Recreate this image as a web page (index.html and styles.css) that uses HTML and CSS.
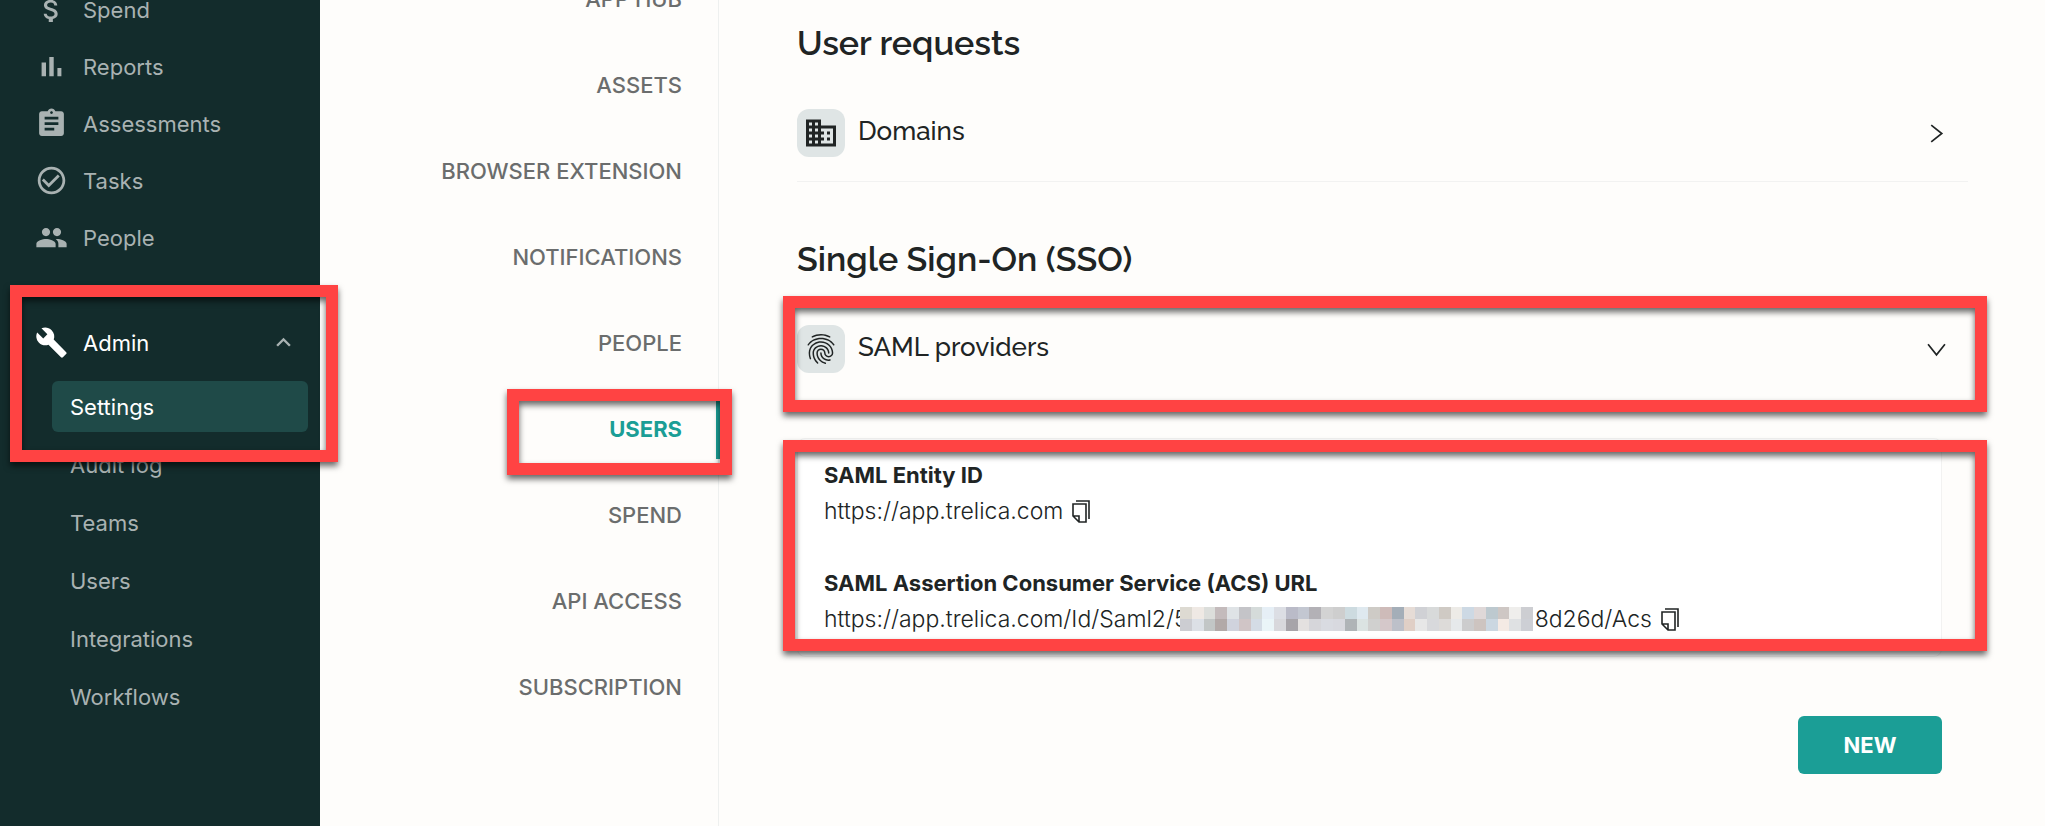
FILE: index.html
```html
<!DOCTYPE html>
<html lang="en">
<head>
    <meta charset="UTF-8">
    <meta name="viewport" content="width=device-width, initial-scale=1.0">
    <title>Settings - Users</title>
    <link rel="stylesheet" href="styles.css">
</head>
<body>
    <div class="app">
        <nav class="sidebar" aria-label="Main">
            <ul class="menu">
                <li><a class="menu-link" href="#">
                    <svg class="menu-icon" viewBox="0 0 24 24"><path d="M11.8 10.9c-2.27-.59-3-1.2-3-2.15 0-1.09 1.01-1.85 2.7-1.85 1.78 0 2.44.85 2.5 2.1h2.21c-.07-1.72-1.12-3.3-3.21-3.81V3h-3v2.16c-1.94.42-3.5 1.68-3.5 3.61 0 2.31 1.91 3.46 4.7 4.13 2.5.6 3 1.48 3 2.41 0 .69-.49 1.79-2.7 1.79-2.06 0-2.87-.92-2.98-2.1h-2.2c.12 2.19 1.76 3.42 3.68 3.83V21h3v-2.15c1.95-.37 3.5-1.5 3.5-3.55 0-2.84-2.43-3.81-4.7-4.4z"/></svg>
                    Spend</a></li>
                <li><a class="menu-link" href="#">
                    <svg class="menu-icon" viewBox="0 0 24 24"><path d="M4.8 9h3.2v10H4.8zM10.4 5h3.2v14h-3.2zM16.3 13h2.9v6h-2.9z"/></svg>
                    Reports</a></li>
                <li><a class="menu-link" href="#">
                    <svg class="menu-icon" viewBox="0 0 24 24"><path d="M19 3h-4.18C14.4 1.84 13.3 1 12 1c-1.3 0-2.4.84-2.82 2H5c-1.1 0-2 .9-2 2v14c0 1.1.9 2 2 2h14c1.1 0 2-.9 2-2V5c0-1.1-.9-2-2-2zm-7 0c.55 0 1 .45 1 1s-.45 1-1 1-1-.45-1-1 .45-1 1-1zm2 14H7v-2h7v2zm3-4H7v-2h10v2zm0-4H7V7h10v2z"/></svg>
                    Assessments</a></li>
                <li><a class="menu-link" href="#">
                    <svg class="menu-icon" viewBox="0 0 24 24"><path d="M16.59 7.58L10 14.17l-3.59-3.58L5 12l5 5 8-8zM12 2C6.48 2 2 6.48 2 12s4.48 10 10 10 10-4.48 10-10S17.52 2 12 2zm0 18c-4.42 0-8-3.58-8-8s3.58-8 8-8 8 3.58 8 8-3.58 8-8 8z"/></svg>
                    Tasks</a></li>
                <li><a class="menu-link" href="#">
                    <svg class="menu-icon" viewBox="0 0 24 24"><path d="M16 11c1.66 0 2.99-1.34 2.99-3S17.66 5 16 5c-1.66 0-3 1.34-3 3s1.34 3 3 3zm-8 0c1.66 0 2.99-1.34 2.99-3S9.66 5 8 5C6.34 5 5 6.34 5 8s1.34 3 3 3zm0 2c-2.33 0-7 1.17-7 3.5V19h14v-2.5c0-2.33-4.67-3.5-7-3.5zm8 0c-.29 0-.62.02-.97.05 1.16.84 1.97 1.97 1.97 3.45V19h6v-2.5c0-2.33-4.67-3.5-7-3.5z"/></svg>
                    People</a></li>
            </ul>

            <div class="admin">
                <a class="menu-link active" href="#">
                    <svg class="menu-icon" viewBox="0 0 24 24"><path d="M22.7 19l-9.1-9.1c.9-2.3.4-5-1.5-6.9-2-2-5-2.4-7.4-1.3L9 6 6 9 1.6 4.7C.4 7.1.9 10.1 2.9 12.1c1.9 1.9 4.6 2.4 6.9 1.5l9.1 9.1c.4.4 1 .4 1.4 0l2.3-2.3c.5-.4.5-1.1.1-1.4z"/></svg>
                    Admin
                    <svg class="collapse-icon" viewBox="0 0 24 24"><path d="M12 8l-6 6 1.41 1.41L12 10.83l4.59 4.58L18 14z"/></svg>
                </a>
                <ul class="submenu">
                    <li><a class="submenu-link active" href="#">Settings</a></li>
                    <li><a class="submenu-link" href="#">Audit log</a></li>
                    <li><a class="submenu-link" href="#">Teams</a></li>
                    <li><a class="submenu-link" href="#">Users</a></li>
                    <li><a class="submenu-link" href="#">Integrations</a></li>
                    <li><a class="submenu-link" href="#">Workflows</a></li>
                </ul>
                <div class="highlight highlight-admin"></div>
            </div>
        </nav>

        <nav class="tabs" aria-label="Settings">
            <a class="tab" href="#">APP HUB</a>
            <a class="tab" href="#">ASSETS</a>
            <a class="tab" href="#">BROWSER EXTENSION</a>
            <a class="tab" href="#">NOTIFICATIONS</a>
            <a class="tab" href="#">PEOPLE</a>
            <a class="tab selected" href="#">USERS<span class="highlight highlight-tab"></span></a>
            <a class="tab" href="#">SPEND</a>
            <a class="tab" href="#">API ACCESS</a>
            <a class="tab" href="#">SUBSCRIPTION</a>
        </nav>

        <main class="content">
            <section>
                <h2>User requests</h2>
                <a class="setting divided" href="#">
                    <span class="tile">
                        <svg viewBox="0 0 24 24"><path d="M12 7V3H2v18h20V7H12zM6 19H4v-2h2v2zm0-4H4v-2h2v2zm0-4H4V9h2v2zm0-4H4V5h2v2zm4 12H8v-2h2v2zm0-4H8v-2h2v2zm0-4H8V9h2v2zm0-4H8V5h2v2zm10 12h-8v-2h2v-2h-2v-2h2v-2h-2V9h8v10zm-2-8h-2v2h2v-2zm0 4h-2v2h2v-2z"/></svg>
                    </span>
                    <span class="setting-name">Domains</span>
                    <svg class="chevron" viewBox="0 0 18 18"><path d="M4 1l10 8-10 8"/></svg>
                </a>
            </section>

            <section>
                <h2>Single Sign-On (SSO)</h2>
                <a class="setting" href="#">
                    <span class="tile">
                        <svg viewBox="0 0 24 24"><path d="M17.81 4.47c-.08 0-.16-.02-.23-.06C15.66 3.42 14 3 12.01 3c-1.98 0-3.86.47-5.57 1.41-.24.13-.54.04-.68-.2-.13-.24-.04-.55.2-.68C7.82 2.52 9.86 2 12.01 2c2.13 0 3.99.47 6.03 1.52.25.13.34.43.21.67-.09.18-.26.28-.44.28zM3.5 9.72c-.1 0-.2-.03-.29-.09-.23-.16-.28-.47-.12-.7.99-1.4 2.25-2.5 3.75-3.27C9.98 4.04 14 4.03 17.15 5.65c1.5.77 2.76 1.86 3.75 3.25.16.22.11.54-.12.7-.23.16-.54.11-.7-.12-.9-1.26-2.04-2.25-3.39-2.94-2.87-1.47-6.54-1.47-9.4.01-1.36.7-2.5 1.7-3.4 2.96-.08.14-.23.21-.39.21zm6.25 12.07c-.13 0-.26-.05-.35-.15-.87-.87-1.34-1.43-2.01-2.64-.69-1.23-1.05-2.73-1.05-4.34 0-2.97 2.54-5.39 5.66-5.39s5.66 2.42 5.66 5.39c0 .28-.22.5-.5.5s-.5-.22-.5-.5c0-2.42-2.09-4.39-4.66-4.39-2.57 0-4.66 1.97-4.66 4.39 0 1.44.32 2.77.93 3.85.64 1.15 1.08 1.64 1.85 2.42.19.2.19.51 0 .71-.11.1-.24.15-.37.15zm7.17-1.85c-1.19 0-2.24-.3-3.1-.89-1.49-1.01-2.38-2.65-2.38-4.39 0-.28.22-.5.5-.5s.5.22.5.5c0 1.41.72 2.74 1.94 3.56.71.48 1.54.71 2.54.71.24 0 .64-.03 1.04-.1.27-.05.53.13.58.41.05.27-.13.53-.41.58-.57.11-1.07.12-1.21.12zM14.91 22c-.04 0-.09-.01-.13-.02-1.59-.44-2.63-1.03-3.72-2.1-1.4-1.39-2.17-3.24-2.17-5.22 0-1.62 1.38-2.94 3.08-2.94 1.7 0 3.08 1.32 3.08 2.94 0 1.07.93 1.94 2.08 1.94s2.08-.87 2.08-1.94c0-3.77-3.25-6.83-7.25-6.83-2.84 0-5.44 1.58-6.61 4.03-.39.81-.59 1.76-.59 2.8 0 .78.07 2.01.67 3.61.1.26-.03.55-.29.64-.26.1-.55-.04-.64-.29-.49-1.31-.73-2.61-.73-3.96 0-1.2.23-2.29.68-3.24 1.33-2.79 4.28-4.6 7.51-4.6 4.55 0 8.25 3.51 8.25 7.83 0 1.62-1.38 2.94-3.08 2.94s-3.08-1.32-3.08-2.94c0-1.07-.93-1.94-2.08-1.94s-2.08.87-2.08 1.94c0 1.71.66 3.31 1.87 4.51.95.94 1.86 1.46 3.27 1.85.27.07.42.35.35.61-.05.23-.26.38-.47.38z"/></svg>
                    </span>
                    <span class="setting-name">SAML providers</span>
                    <svg class="chevron" viewBox="0 0 18 18"><path d="M1 4l8 10 8-10"/></svg>
                    <span class="highlight highlight-provider"></span>
                </a>

                <div class="details-wrap">
                    <dl class="details">
                        <dt>SAML Entity ID</dt>
                        <dd>https://app.trelica.com
                            <button class="copy" type="button" aria-label="Copy entity ID"><svg viewBox="0 0 18 23"><path d="M1 4h13v18H7l-6-6zM1 16h6v6M4 1h13v18"/></svg></button>
                        </dd>
                        <dt>SAML Assertion Consumer Service (ACS) URL</dt>
                        <dd>
                            <span class="url-start">https://app.trelica.com/Id/Saml2/5</span>
                            <svg class="redacted" id="redacted" viewBox="0 0 30 2" preserveAspectRatio="none" shape-rendering="crispEdges"></svg>
                            8d26d/Acs
                            <button class="copy" type="button" aria-label="Copy ACS URL"><svg viewBox="0 0 18 23"><path d="M1 4h13v18H7l-6-6zM1 16h6v6M4 1h13v18"/></svg></button>
                        </dd>
                    </dl>
                    <div class="highlight highlight-details"></div>
                </div>

                <div class="actions">
                    <button class="new-button" type="button">NEW</button>
                </div>
            </section>
        </main>
    </div>

    <script>
        // Mosaic over the private part of the URL
        const mosaic = [
            ['dddad2', 'efe9e4', 'dcdedb', 'c4bbbc', 'dfe3e6', 'c4c4c8', 'd5dbda', 'e6eff6', 'dcdee4', 'babbc8', 'c3c7d1', 'b3b1b6', 'd3d3d3', 'cecece', 'cddbe0', 'dfe9ef', 'cecbc6', 'cebbb9', 'a4aeb8', 'e6dcd6', 'd0d1d5', 'd8dada', 'cfcac4', 'edebe7', 'cdd9e4', 'dfd8d8', 'bdc9cf', 'cec7c4', 'efeeec', 'cdced2'],
            ['cccdd2', 'dce0e6', 'c2c6c6', 'b2a9a8', 'd0d3dd', 'd0c5c6', 'd4dce5', 'eaf5f8', 'd8d8dc', 'a7a4a9', 'e4e1e0', 'd6d6da', 'd9dbe1', 'd8d9df', 'afb4b7', 'dbe3e2', 'd0d0cf', 'd5c8ca', 'bdc0c9', 'e0cfc6', 'e7e7e7', 'd8d9dc', 'dddbd9', 'e6e9eb', 'cccccd', 'cdc4c0', 'cbd7e1', 'f4eae4', 'dfe1e3', 'cdcfd5']
        ];
        const redacted = document.getElementById('redacted');

        mosaic.forEach((row, y) => {
            row.forEach((color, x) => {
                const rect = document.createElementNS('http://www.w3.org/2000/svg', 'rect');
                rect.setAttribute('x', x);
                rect.setAttribute('y', y);
                rect.setAttribute('width', 1);
                rect.setAttribute('height', 1);
                rect.setAttribute('fill', '#' + color);
                redacted.appendChild(rect);
            });
        });
    </script>
</body>
</html>
```

FILE: styles.css
```css
* {
    box-sizing: border-box;
}
body {
    margin: 0;
    font-family: Inter, 'Liberation Sans', sans-serif;
    font-size: 22px;
    background-color: #fefdfb;
    color: #202424;
    overflow: hidden;
}
a {
    color: inherit;
    text-decoration: none;
}
ul {
    list-style: none;
    margin: 0;
    padding: 0;
}
.app {
    display: flex;
    min-height: 100vh;
}

/* Sidebar */
.sidebar {
    flex: 0 0 320px;
    background-color: #132c2c;
    color: #a9b2b2;
}
.menu {
    margin-top: -19px;
}
.menu-link {
    display: flex;
    align-items: center;
    gap: 15px;
    height: 57px;
    padding: 0 22px 0 35px;
}
.menu-icon {
    width: 33px;
    height: 33px;
    fill: currentColor;
}
.menu-link.active,
.submenu-link.active {
    color: #ffffff;
}
.collapse-icon {
    width: 29px;
    height: 29px;
    margin-left: auto;
    fill: #a9b2b2;
}
.admin {
    position: relative;
    margin-top: 48px;
}
.submenu {
    display: flex;
    flex-direction: column;
    gap: 7px;
    padding: 10px 12px 0 52px;
}
.submenu-link {
    display: flex;
    align-items: center;
    height: 51px;
    padding: 0 18px;
    border-radius: 6px;
}
.submenu-link.active {
    background-color: #1f4a48;
}

/* Settings tabs */
.tabs {
    display: flex;
    flex-direction: column;
    flex: 0 0 399px;
    gap: 26px;
    margin-top: -31px;
    border-right: 1px solid #eef0ef;
    font-weight: 500;
    color: #6b6d6d;
}
.tab {
    position: relative;
    display: flex;
    align-items: center;
    justify-content: flex-end;
    height: 60px;
    padding-right: 36px;
}
.tab.selected {
    margin-right: -2px;
    padding-right: 34px;
    border-right: 4px solid #1b9e96;
    color: #1b9e96;
    font-weight: 700;
}

/* Content */
.content {
    flex: 1;
    min-width: 0;
    padding: 0 77px 0 78px;
}
h2 {
    margin: 0;
    padding: 19px 0 18px;
    font-family: Raleway, Lato, sans-serif;
    font-size: 34px;
    font-weight: 600;
    line-height: 48px;
}
section + section h2 {
    padding-top: 53px;
}
.setting {
    position: relative;
    display: flex;
    align-items: center;
    gap: 13px;
    padding: 24px 22px 24px 0;
}
.setting.divided {
    border-bottom: 1px solid #f2f2f1;
}
.tile {
    display: flex;
    align-items: center;
    justify-content: center;
    width: 48px;
    height: 48px;
    border-radius: 12px;
    background-color: #dfe5e5;
}
.tile svg {
    width: 36px;
    height: 36px;
    fill: #202424;
}
.setting-name {
    flex: 1;
    padding-bottom: 5px;
    font-family: Raleway, Lato, sans-serif;
    font-size: 26px;
    font-weight: 500;
    line-height: 36px;
}
.chevron {
    width: 19px;
    height: 19px;
    fill: none;
    stroke: #202424;
    stroke-width: 1.6;
}
.details-wrap {
    position: relative;
    margin-top: 41px;
}
.details {
    margin: 0 26px 0 0;
    padding: 18px 26px 19px;
    border: 1px solid #f2f2f1;
    border-radius: 8px;
    background-color: #ffffff;
    line-height: 36px;
}
.details dt {
    font-weight: 700;
}
.details dd {
    display: flex;
    align-items: center;
    margin: 0;
    font-size: 23px;
    font-weight: 300;
}
.details dd + dt {
    margin-top: 36px;
}
.copy {
    display: flex;
    margin-left: 9px;
    padding: 0;
    border: none;
    background: none;
    cursor: pointer;
}
.copy svg {
    width: 18px;
    height: 23px;
    fill: none;
    stroke: #202424;
    stroke-width: 1.6;
}
.redacted {
    width: 353px;
    height: 24px;
    margin: 0 2px 0 -8px;
}
.actions {
    display: flex;
    justify-content: flex-end;
    margin: 59px 26px 0 0;
}
.new-button {
    width: 144px;
    height: 58px;
    border: none;
    border-radius: 6px;
    background-color: #1b9e96;
    color: #ffffff;
    font-family: inherit;
    font-size: 22px;
    font-weight: 700;
    cursor: pointer;
}

/* Callout frames */
.highlight {
    position: absolute;
    z-index: 1;
    border: 12px solid #ff4343;
    filter: drop-shadow(0 4px 3px rgba(0, 0, 0, 0.6));
    pointer-events: none;
}
.highlight-admin {
    top: -29px;
    left: 10px;
    right: -18px;
    height: 177px;
}
.highlight-tab {
    top: -10px;
    right: -16px;
    width: 225px;
    height: 86px;
}
.highlight-provider {
    top: -5px;
    bottom: -15px;
    left: -14px;
    right: -19px;
}
.highlight-details {
    top: 2px;
    bottom: 6px;
    left: -14px;
    right: -19px;
}
```
